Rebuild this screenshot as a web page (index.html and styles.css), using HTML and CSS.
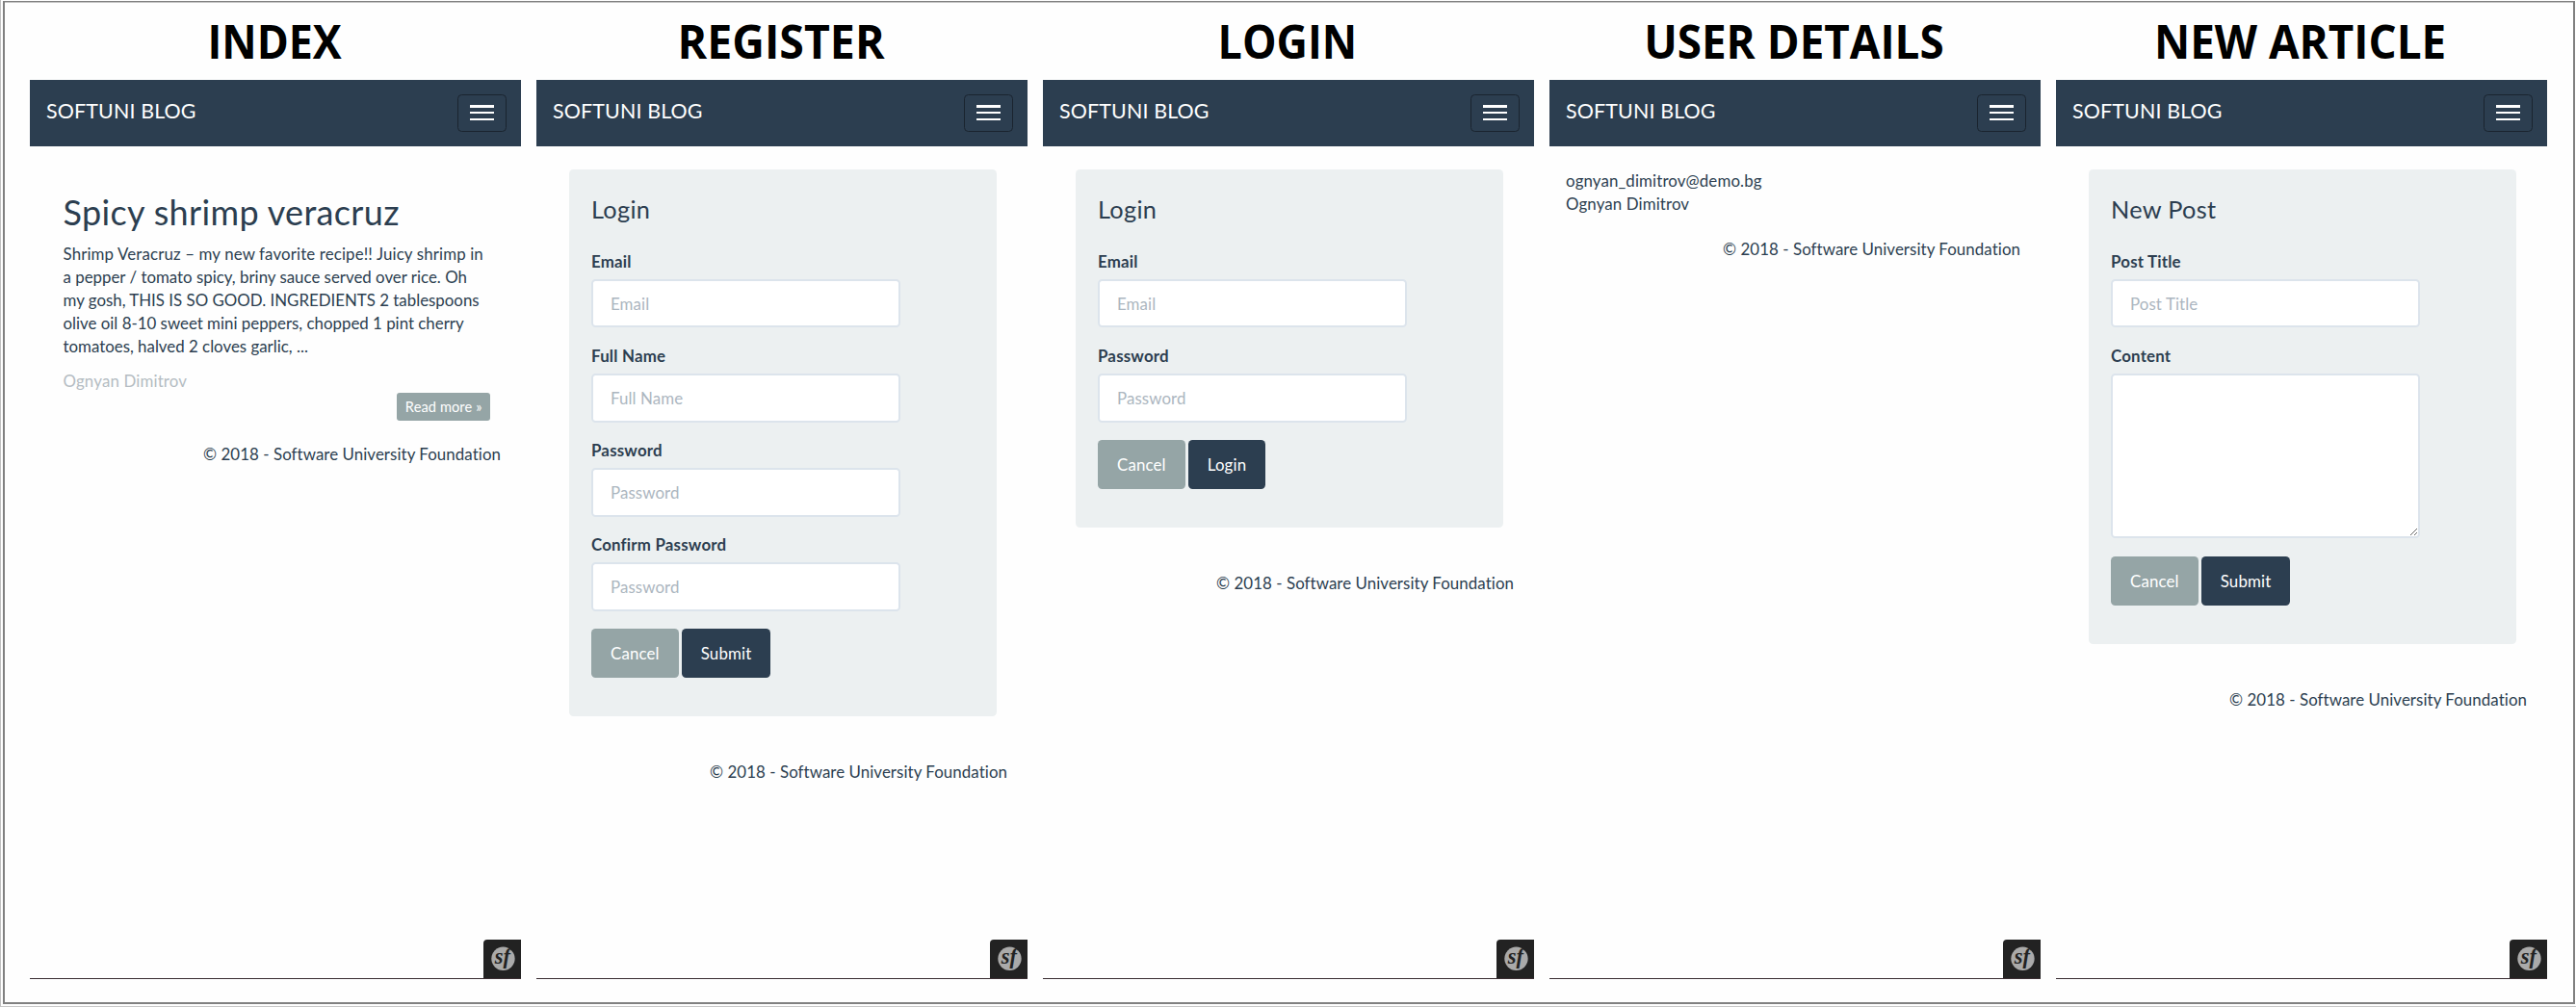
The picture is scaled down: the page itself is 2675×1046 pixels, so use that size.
FILE: index.html
```html
<!DOCTYPE html>
<html lang="en">
<head>
<meta charset="utf-8">
<title>SoftUni Blog</title>
<link rel="stylesheet" href="styles.css">
</head>
<body>
<main class="board">
  <section class="screen">
    <h1 class="caption"><span>INDEX</span></h1>
    <div class="page">
      <header class="navbar"><span class="brand">SOFTUNI BLOG</span><button class="toggle"><i></i><i></i><i></i></button></header>
      <article class="post">
        <h2>Spicy shrimp veracruz</h2>
        <p>Shrimp Veracruz – my new favorite recipe!! Juicy shrimp in<br>a pepper / tomato spicy, briny sauce served over rice. Oh<br>my gosh, THIS IS SO GOOD. INGREDIENTS 2 tablespoons<br>olive oil 8-10 sweet mini peppers, chopped 1 pint cherry<br>tomatoes, halved 2 cloves garlic, ...</p>
        <small class="author">Ognyan Dimitrov</small>
        <a class="more">Read more »</a>
      </article>
      <footer class="copy copy-post">© 2018 - Software University Foundation</footer>
      <div class="debug"><svg class="sf" viewBox="0 0 39 41"><circle cx="20.5" cy="20.3" r="12.5"/><text x="19.8" y="26">sf</text></svg></div>
    </div>
  </section>
  <section class="screen">
    <h1 class="caption caption-register"><span>REGISTER</span></h1>
    <div class="page">
      <header class="navbar"><span class="brand">SOFTUNI BLOG</span><button class="toggle"><i></i><i></i><i></i></button></header>
      <form class="well">
        <h3>Login</h3>
        <div class="field"><label>Email</label><input placeholder="Email"></div>
        <div class="field"><label>Full Name</label><input placeholder="Full Name"></div>
        <div class="field"><label>Password</label><input placeholder="Password"></div>
        <div class="field"><label>Confirm Password</label><input placeholder="Password"></div>
        <div class="actions"><a class="btn">Cancel</a><a class="btn primary">Submit</a></div>
      </form>
      <footer class="copy">© 2018 - Software University Foundation</footer>
      <div class="debug"><svg class="sf" viewBox="0 0 39 41"><circle cx="20.5" cy="20.3" r="12.5"/><text x="19.8" y="26">sf</text></svg></div>
    </div>
  </section>
  <section class="screen">
    <h1 class="caption"><span>LOGIN</span></h1>
    <div class="page">
      <header class="navbar"><span class="brand">SOFTUNI BLOG</span><button class="toggle"><i></i><i></i><i></i></button></header>
      <form class="well">
        <h3>Login</h3>
        <div class="field"><label>Email</label><input placeholder="Email"></div>
        <div class="field"><label>Password</label><input placeholder="Password"></div>
        <div class="actions"><a class="btn">Cancel</a><a class="btn primary">Login</a></div>
      </form>
      <footer class="copy">© 2018 - Software University Foundation</footer>
      <div class="debug"><svg class="sf" viewBox="0 0 39 41"><circle cx="20.5" cy="20.3" r="12.5"/><text x="19.8" y="26">sf</text></svg></div>
    </div>
  </section>
  <section class="screen">
    <h1 class="caption caption-wide"><span>USER DETAILS</span></h1>
    <div class="page">
      <header class="navbar"><span class="brand">SOFTUNI BLOG</span><button class="toggle"><i></i><i></i><i></i></button></header>
      <div class="profile">ognyan_dimitrov@demo.bg<br>Ognyan Dimitrov</div>
      <footer class="copy copy-profile">© 2018 - Software University Foundation</footer>
      <div class="debug"><svg class="sf" viewBox="0 0 39 41"><circle cx="20.5" cy="20.3" r="12.5"/><text x="19.8" y="26">sf</text></svg></div>
    </div>
  </section>
  <section class="screen">
    <h1 class="caption caption-wide"><span>NEW ARTICLE</span></h1>
    <div class="page">
      <header class="navbar"><span class="brand">SOFTUNI BLOG</span><button class="toggle"><i></i><i></i><i></i></button></header>
      <form class="well">
        <h3>New Post</h3>
        <div class="field"><label>Post Title</label><input placeholder="Post Title"></div>
        <div class="field"><label>Content</label><textarea></textarea></div>
        <div class="actions"><a class="btn">Cancel</a><a class="btn primary">Submit</a></div>
      </form>
      <footer class="copy">© 2018 - Software University Foundation</footer>
      <div class="debug"><svg class="sf" viewBox="0 0 39 41"><circle cx="20.5" cy="20.3" r="12.5"/><text x="19.8" y="26">sf</text></svg></div>
    </div>
  </section>
</main>
</body>
</html>
```
FILE: styles.css
```css
* { box-sizing: border-box; }
body {
  margin: 0;
  height: 1046px;
  background: #fefefe;
  border-left: 1px solid #c0c0c0;
  border-bottom: 1px solid #c8c8c8;
  padding: 1px 1px 2px 2px;
  color: #2c3e50;
  font: 16.875px/24.1px Lato, sans-serif;
}
.board {
  display: flex;
  gap: 16px;
  height: 1042px;
  padding: 0 0 24px 26px;
  border: 2px solid #808080;
  border-top-width: 1px;
  box-shadow: inset 0 1px #c4c4c4;
}
.screen {
  width: 510px;
  flex: none;
  display: flex;
  flex-direction: column;
}
.caption {
  margin: 0;
  height: 81px;
  padding: 9px 2px 0 0;
  text-align: center;
  color: #000;
  font: bold 47.6px/64px "Open Sans", sans-serif;
}
.caption span { display: inline-block; white-space: nowrap; transform: scaleX(.94); }
.caption-register span { transform: scaleX(.977); }
.caption-wide span { transform: scaleX(.962); }
.page { flex: 1; display: flex; flex-direction: column; }
.navbar {
  height: 69px;
  flex: none;
  display: flex;
  justify-content: space-between;
  align-items: flex-start;
  padding: 15px 15px 0 17px;
  background: #2c3e50;
}
.brand { color: #fff; font-size: 21.4px; line-height: 34px; letter-spacing: .15px; }
.toggle {
  width: 51px;
  height: 39px;
  padding: 10px 12px;
  display: flex;
  flex-direction: column;
  justify-content: flex-start;
  gap: 5px;
  border: 1px solid #1a242f;
  border-radius: 4.5px;
  background: none;
}
.toggle i { height: 2px; width: 25px; flex: none; background: #fff; }
.toggle i:first-child { height: 3px; margin-bottom: -1px; }
.post { padding: 48px 32px 0 34.5px; display: flex; flex-direction: column; }
.post h2 { margin: 0 0 12.4px; font-size: 36px; font-weight: 400; line-height: 40px; letter-spacing: .35px; }
.post p { margin: 0 0 12px; line-height: 24px; white-space: nowrap; }
.post p::first-line { letter-spacing: .13px; }
.author { font-size: 16.875px; color: #b4bcc2; letter-spacing: .15px; }
.more {
  align-self: flex-end;
  height: 29px;
  padding: 0 8.5px;
  border-radius: 3px;
  background: #95a5a6;
  color: #fff;
  font-size: 14.6px;
  line-height: 29px;
  letter-spacing: .1px;
}
.well {
  margin: 24px 32px 0 34px;
  padding: 22.5px 23px 40px;
  border-radius: 4.5px;
  background: #ecf0f1;
}
.well h3 { margin: 0 0 25px; font-size: 25.3px; font-weight: 400; line-height: 36px; letter-spacing: .3px; }
.field { margin-bottom: 17.1px; }
.field label { display: block; padding-top: .5px; margin-bottom: 5.8px; font-weight: 700; line-height: 24.1px; letter-spacing: .2px; }
.field input, .field textarea {
  display: block;
  width: 320.5px;
  height: 50.6px;
  padding: 0 18px;
  border: 2px solid #dce4ec;
  border-radius: 4.5px;
  background: #fff;
  color: #2c3e50;
  font: 16.875px/24px Lato, sans-serif;
}
.field input { letter-spacing: .1px; }
.field textarea { height: 171.5px; }
.field ::placeholder { color: #acb6c0; opacity: 1; }
.actions { display: flex; gap: 3px; padding-top: 1.1px; }
.btn {
  height: 51px;
  padding: 0 20px;
  border-radius: 4.5px;
  background: #95a5a6;
  color: #fff;
  line-height: 51px;
  letter-spacing: .15px;
}
.btn.primary { background: #2c3e50; }
.copy { margin-top: 46px; padding-right: 21px; text-align: right; letter-spacing: .07px; }
.copy-post { margin-top: 23px; }
.profile { padding: 24px 17px 0; letter-spacing: .12px; }
.copy-profile { margin-top: 23px; }
.debug { margin-top: auto; display: flex; justify-content: flex-end; border-bottom: 1px solid #3a2d32; }
.sf { display: block; width: 39px; height: 40px; border-radius: 4px 0 0 0; background: #222; }
.sf circle { fill: #aaa; }
.sf text { fill: #222; font: italic bold 23px "Liberation Serif", serif; text-anchor: middle; }
```
